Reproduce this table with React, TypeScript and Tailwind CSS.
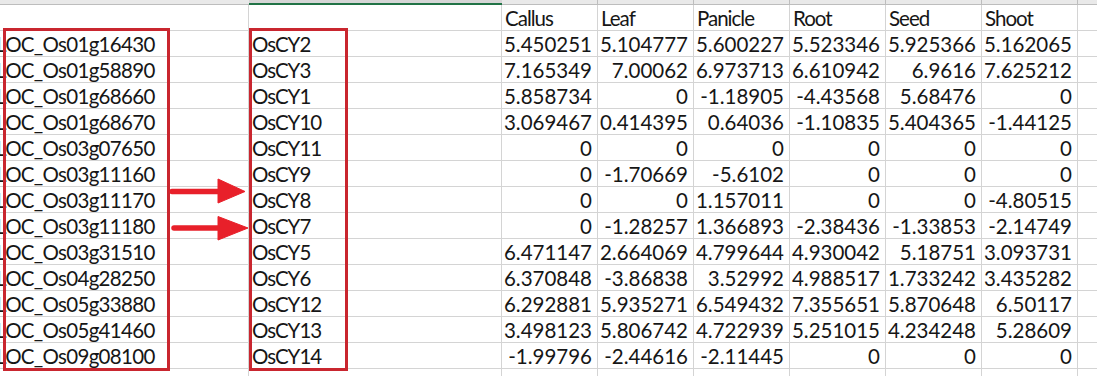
import React from 'react';

const headers = ['Callus', 'Leaf', 'Panicle', 'Root', 'Seed', 'Shoot'];

const rows: [string, string, string[]][] = [
  ['LOC_Os01g16430', 'OsCY2', ['5.450251', '5.104777', '5.600227', '5.523346', '5.925366', '5.162065']],
  ['LOC_Os01g58890', 'OsCY3', ['7.165349', '7.00062', '6.973713', '6.610942', '6.9616', '7.625212']],
  ['LOC_Os01g68660', 'OsCY1', ['5.858734', '0', '-1.18905', '-4.43568', '5.68476', '0']],
  ['LOC_Os01g68670', 'OsCY10', ['3.069467', '0.414395', '0.64036', '-1.10835', '5.404365', '-1.44125']],
  ['LOC_Os03g07650', 'OsCY11', ['0', '0', '0', '0', '0', '0']],
  ['LOC_Os03g11160', 'OsCY9', ['0', '-1.70669', '-5.6102', '0', '0', '0']],
  ['LOC_Os03g11170', 'OsCY8', ['0', '0', '1.157011', '0', '0', '-4.80515']],
  ['LOC_Os03g11180', 'OsCY7', ['0', '-1.28257', '1.366893', '-2.38436', '-1.33853', '-2.14749']],
  ['LOC_Os03g31510', 'OsCY5', ['6.471147', '2.664069', '4.799644', '4.930042', '5.18751', '3.093731']],
  ['LOC_Os04g28250', 'OsCY6', ['6.370848', '-3.86838', '3.52992', '4.988517', '1.733242', '3.435282']],
  ['LOC_Os05g33880', 'OsCY12', ['6.292881', '5.935271', '6.549432', '7.355651', '5.870648', '6.50117']],
  ['LOC_Os05g41460', 'OsCY13', ['3.498123', '5.806742', '4.722939', '5.251015', '4.234248', '5.28609']],
  ['LOC_Os09g08100', 'OsCY14', ['-1.99796', '-2.44616', '-2.11445', '0', '0', '0']],
];

// excel-ish cell: 25px content + 1px gridline
const cell = 'h-[26px] border-r border-b border-[#d4d4d4] flex whitespace-nowrap';
const txt = 'leading-[25px] pt-[1px]';

function Row({ a, b, vals, header }: { a: string; b: string; vals: string[]; header?: boolean }) {
  return (
    <div className="flex">
      {/* column A is scrolled a little past its left edge */}
      <div className={`${cell} w-[249px] overflow-hidden`}>
        <span className={`${txt} -ml-[4px] tracking-[-0.7px]`}>{a}</span>
      </div>
      <div className={`${cell} w-[253px] pl-[3px]`}>
        <span className={`${txt} tracking-[-1px]`}>{b}</span>
      </div>
      {vals.map((v, i) => (
        <div key={i} className={`${cell} w-[96px] ${header ? 'justify-start pl-[3px]' : 'justify-end pr-[5px]'}`}>
          <span className={`${txt} ${header ? 'tracking-[-1px]' : ''}`}>{v}</span>
        </div>
      ))}
      <div className={`${cell} flex-1 border-r-0`} />
    </div>
  );
}

export default function App() {
  return (
    <div
      className="relative w-[1097px] h-[376px] overflow-hidden bg-white text-[20.5px] text-[#161616]"
      style={{ fontFamily: 'Lato, "Noto Sans CJK SC", sans-serif' }}
    >
      {/* column header strip, mostly scrolled off */}
      <div className="flex h-[5px]">
        <div className="w-[249px] bg-[#e9e9e9] border-b border-[#bdbdbd]" />
        <div className="w-[253px] bg-[#d6d6d6] border-b-2 border-[#217346]" />
        {headers.map((h) => (
          <div key={h} className="w-[96px] bg-[#e9e9e9] border-r border-b border-[#bdbdbd]" />
        ))}
        <div className="flex-1 bg-[#e9e9e9] border-b border-[#bdbdbd]" />
      </div>

      <Row a="" b="" vals={headers} header />
      {rows.map(([a, b, vals]) => (
        <Row key={a} a={a} b={b} vals={vals} />
      ))}
      <div className="flex h-[20px]">
        <div className="w-[249px] border-r border-[#d4d4d4]" />
        <div className="w-[253px] border-r border-[#d4d4d4]" />
        {headers.map((h) => (
          <div key={h} className="w-[96px] border-r border-[#d4d4d4]" />
        ))}
      </div>

      {/* red annotation boxes */}
      <div className="absolute left-[3px] top-[28px] w-[167px] h-[343px] border-[3px] border-[#c9262f]" />
      <div className="absolute left-[249px] top-[28px] w-[99px] h-[343px] border-[3px] border-[#c9262f]" />

      {/* arrows */}
      <svg className="absolute left-0 top-0" width="1097" height="376">
        <g fill="#e8202a" stroke="#e8202a">
          <line x1="172" y1="191.5" x2="222" y2="191.5" strokeWidth="5.5" strokeLinecap="round" />
          <polygon points="218,179 245,191.5 218,203" strokeWidth="1" strokeLinejoin="round" />
          <line x1="174" y1="228" x2="222" y2="228" strokeWidth="5.5" strokeLinecap="round" />
          <polygon points="218,216.5 248,228 218,240" strokeWidth="1" strokeLinejoin="round" />
        </g>
      </svg>
    </div>
  );
}
